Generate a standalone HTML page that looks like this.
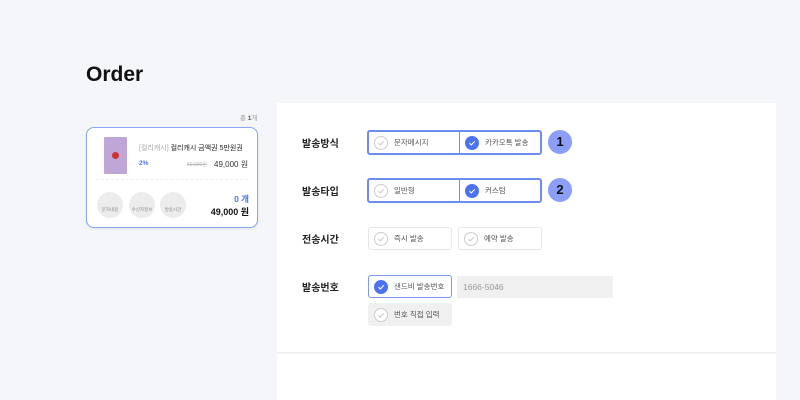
<!DOCTYPE html><html><head><meta charset="utf-8"><style>
*{margin:0;padding:0;box-sizing:border-box}
body{width:800px;height:400px;background:#f4f6fa;font-family:"Liberation Sans","Noto Sans CJK KR",sans-serif;position:relative;overflow:hidden;color:#222}
.a{position:absolute}
.lbl{font-size:10px;font-weight:bold;color:#222}
.box{position:absolute;height:23px;border:1px solid #e6e6e6;background:#fff;border-radius:3px;font-size:7.5px;color:#555;display:flex;align-items:center}
.sel{border:2px solid #6c8cf0}
.c{width:14px;height:14px;border-radius:50%;border:1px solid #ccc;margin:0 6px 0 5px;display:flex;align-items:center;justify-content:center;background:#fff}
.c svg{width:8px;height:8px}
.on{background:#4c72ef;border-color:#4c72ef}
.bd{position:absolute;width:24px;height:24px;border-radius:50%;background:#8b9ef8;color:#111;font-weight:bold;font-size:13px;text-align:center;line-height:24px}
.ic{position:absolute;width:26px;height:26px;border-radius:50%;background:#ececec;font-size:4.5px;color:#888;text-align:center;padding-top:15px}
</style></head><body>
<div class="a" style="left:86px;top:63px;font-size:21px;font-weight:bold;color:#111">Order</div>
<div class="a" style="left:240px;top:112px;font-size:6.5px;color:#999">총 <b style="color:#555">1</b>개</div>
<div class="a" style="left:86px;top:127px;width:172px;height:101px;background:#fff;border:1.5px solid #8aa6f5;border-radius:8px;box-shadow:0 1px 3px rgba(0,0,0,.08)">
 <div class="a" style="left:17px;top:9px;width:23px;height:37px;background:#c0a6d6;border-radius:1px"><div class="a" style="left:8px;top:15px;width:7px;height:7px;border-radius:50%;background:#c33"></div></div>
 <div class="a" style="left:52px;top:15px;font-size:7px;color:#222;white-space:nowrap"><span style="color:#aaa">[컬리캐시]</span> 컬리캐시 금액권 5만원권</div>
 <div class="a" style="left:52px;top:32px;font-size:6.5px;color:#4c72ef;font-weight:bold">2%</div>
 <div class="a" style="left:100px;top:33px;font-size:5px;color:#bbb;text-decoration:line-through">50,000원</div>
 <div class="a" style="left:127px;top:31px;font-size:8px;color:#333">49,000 원</div>
 <div class="a" style="left:9px;top:51px;width:152px;border-top:1px dashed #eee"></div>
 <div class="ic" style="left:10px;top:64px">문자내용</div>
 <div class="ic" style="left:42px;top:64px">수신자정보</div>
 <div class="ic" style="left:73px;top:64px">발송시간</div>
 <div class="a" style="right:8px;top:65px;font-size:8.5px;color:#4c72ef;font-weight:bold">0 개</div>
 <div class="a" style="right:8px;top:77px;font-size:9px;font-weight:bold;color:#111">49,000 원</div>
</div>
<div class="a" style="left:277px;top:103px;width:499px;height:250px;background:#fff;border-bottom:1px solid #eee"></div>
<div class="a" style="left:277px;top:354px;width:499px;height:46px;background:#fff"></div>
<div class="a lbl" style="left:302px;top:135px">발송방식</div>
<div class="a lbl" style="left:302px;top:183px">발송타입</div>
<div class="a lbl" style="left:302px;top:231px">전송시간</div>
<div class="a lbl" style="left:302px;top:279px">발송번호</div>
<svg width="0" height="0" style="position:absolute"><defs><path id="k" d="M1.5 4.2 3.3 6 6.8 2.3" fill="none" stroke-width="1.1"/></defs></svg>
<div class="box sel" style="left:367px;top:130px;width:175px;height:25px;padding:0">
 <div style="width:91px;height:100%;display:flex;align-items:center;border-right:1px solid #e6e6e6"><div class="c"><svg viewBox="0 0 8 8"><use href="#k" stroke="#ccc"/></svg></div>문자메시지</div>
 <div style="display:flex;align-items:center;height:100%;border-left:1.5px solid #6c8cf0;margin-left:-1px"><div class="c on"><svg viewBox="0 0 8 8"><use href="#k" stroke="#fff"/></svg></div>카카오톡 발송</div>
</div>
<div class="bd" style="left:548px;top:130px">1</div>
<div class="box sel" style="left:367px;top:178px;width:175px;height:25px;padding:0">
 <div style="width:91px;height:100%;display:flex;align-items:center;border-right:1px solid #e6e6e6"><div class="c"><svg viewBox="0 0 8 8"><use href="#k" stroke="#ccc"/></svg></div>일반형</div>
 <div style="display:flex;align-items:center;height:100%;border-left:1.5px solid #6c8cf0;margin-left:-1px"><div class="c on"><svg viewBox="0 0 8 8"><use href="#k" stroke="#fff"/></svg></div>커스텀</div>
</div>
<div class="bd" style="left:548px;top:178px">2</div>
<div class="box" style="left:368px;top:227px;width:84px"><div class="c"><svg viewBox="0 0 8 8"><use href="#k" stroke="#ccc"/></svg></div>즉시 발송</div>
<div class="box" style="left:458px;top:227px;width:84px"><div class="c"><svg viewBox="0 0 8 8"><use href="#k" stroke="#ccc"/></svg></div>예약 발송</div>
<div class="box" style="left:368px;top:275px;width:84px;border-color:#7c98f2"><div class="c on"><svg viewBox="0 0 8 8"><use href="#k" stroke="#fff"/></svg></div>샌드비 발송번호</div>
<div class="a" style="left:457px;top:276px;width:156px;height:22px;background:#f0f0f0;font-size:8.5px;color:#999;line-height:22px;padding-left:6px">1666-5046</div>
<div class="box" style="left:368px;top:303px;width:84px;background:#f0f0f0;border-color:#f0f0f0"><div class="c"><svg viewBox="0 0 8 8"><use href="#k" stroke="#ccc"/></svg></div>번호 직접 입력</div>
</body></html>
